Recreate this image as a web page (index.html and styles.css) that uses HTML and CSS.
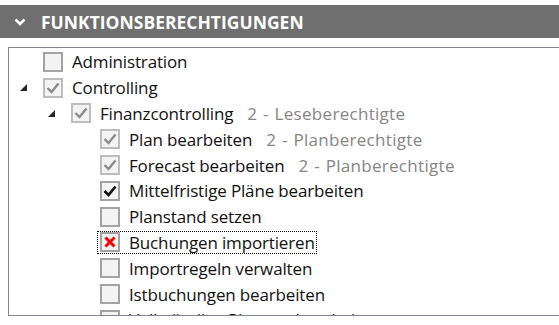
FILE: index.html
```html
<!DOCTYPE html>
<html lang="de">
<head>
  <meta charset="UTF-8">
  <title>Funktionsberechtigungen</title>
  <link rel="stylesheet" href="styles.css">
</head>
<body>
  <div class="section-header">
    <svg class="chevron" width="12" height="8" viewBox="0 0 12 8">
      <polyline points="1.5,1.5 6,6 10.5,1.5" fill="none" stroke="#fff" stroke-width="2.6"/>
    </svg>
    <span class="section-title">FUNKTIONSBERECHTIGUNGEN</span>
  </div>

  <div class="tree">
    <div class="row level-0">
      <span class="expander"></span>
      <span class="box"></span>
      <span class="label">Administration</span>
    </div>
    <div class="row level-0">
      <span class="expander open"><svg width="7" height="7" viewBox="0 0 7 7"><polygon points="7,0 7,7 0,7" fill="#262626"/></svg></span>
      <span class="box disabled"><svg width="14" height="12" viewBox="0 0 14 12"><polyline points="1.5,6 5.5,10 12.5,1.5" fill="none" stroke="#8a8a8a" stroke-width="2.4"/></svg></span>
      <span class="label">Controlling</span>
    </div>
    <div class="row level-1">
      <span class="expander open"><svg width="7" height="7" viewBox="0 0 7 7"><polygon points="7,0 7,7 0,7" fill="#262626"/></svg></span>
      <span class="box disabled"><svg width="14" height="12" viewBox="0 0 14 12"><polyline points="1.5,6 5.5,10 12.5,1.5" fill="none" stroke="#8a8a8a" stroke-width="2.4"/></svg></span>
      <span class="label">Finanzcontrolling</span>
      <span class="hint">2 - Leseberechtigte</span>
    </div>
    <div class="row level-2">
      <span class="expander"></span>
      <span class="box disabled"><svg width="14" height="12" viewBox="0 0 14 12"><polyline points="1.5,6 5.5,10 12.5,1.5" fill="none" stroke="#8a8a8a" stroke-width="2.4"/></svg></span>
      <span class="label">Plan bearbeiten</span>
      <span class="hint">2 - Planberechtigte</span>
    </div>
    <div class="row level-2">
      <span class="expander"></span>
      <span class="box disabled"><svg width="14" height="12" viewBox="0 0 14 12"><polyline points="1.5,6 5.5,10 12.5,1.5" fill="none" stroke="#8a8a8a" stroke-width="2.4"/></svg></span>
      <span class="label">Forecast bearbeiten</span>
      <span class="hint">2 - Planberechtigte</span>
    </div>
    <div class="row level-2">
      <span class="expander"></span>
      <span class="box"><svg width="14" height="12" viewBox="0 0 14 12"><polyline points="1.5,6 5.5,10 12.5,1.5" fill="none" stroke="#111" stroke-width="2.7"/></svg></span>
      <span class="label">Mittelfristige Pläne bearbeiten</span>
    </div>
    <div class="row level-2">
      <span class="expander"></span>
      <span class="box"></span>
      <span class="label">Planstand setzen</span>
    </div>
    <div class="row level-2">
      <span class="expander"></span>
      <span class="focus">
        <span class="box"><svg width="12" height="12" viewBox="0 0 12 12"><path d="M1.5,1.5 L10.5,10.5 M10.5,1.5 L1.5,10.5" fill="none" stroke="#f00" stroke-width="3"/></svg></span>
        <span class="label">Buchungen importieren</span>
      </span>
    </div>
    <div class="row level-2">
      <span class="expander"></span>
      <span class="box"></span>
      <span class="label">Importregeln verwalten</span>
    </div>
    <div class="row level-2">
      <span class="expander"></span>
      <span class="box"></span>
      <span class="label">Istbuchungen bearbeiten</span>
    </div>
    <div class="row level-2">
      <span class="expander"></span>
      <span class="box"></span>
      <span class="label">Vollständige Planung bearbeiten</span>
    </div>
  </div>
</body>
</html>
```

FILE: styles.css
```css
body {
  margin: 0;
  background-color: #fff;
  font-family: 'Open Sans', 'Noto Sans', sans-serif;
  overflow: hidden;
}

.section-header {
  margin-top: 5px;
  height: 33px;
  background-color: #6f6f6f;
  display: flex;
  align-items: center;
}

.chevron {
  margin-left: 14px;
  margin-right: 15px;
}

.section-title {
  color: #fff;
  font-weight: bold;
  font-size: 17.5px;
  letter-spacing: 0;
}

.tree {
  margin-top: 9px;
  margin-left: 8px;
  height: 266px;
  border: 1px solid #828790;
  border-right: none;
  padding-top: 1px;
  overflow: hidden;
}

.row {
  height: 25.8px;
  display: flex;
  align-items: center;
  font-size: 17px;
  letter-spacing: -0.15px;
  color: #111;
  white-space: nowrap;
}

.level-1 {
  padding-left: 28px;
}

.level-2 {
  padding-left: 57px;
}

.expander {
  width: 7px;
  height: 7px;
  margin-left: 11px;
  margin-right: 16px;
  display: flex;
}

.box {
  box-sizing: border-box;
  width: 20px;
  height: 20px;
  border: 2px solid #a3a3a3;
  background-color: #f3f3f3;
  display: flex;
  align-items: center;
  justify-content: center;
  margin-right: 9px;
}

.box.disabled {
  border-color: #bdbdbd;
}

.hint {
  color: #858585;
  margin-left: 14px;
  letter-spacing: 0.3px;
  word-spacing: 1px;
}

.focus {
  display: flex;
  align-items: center;
  outline: 1px dotted #000;
  outline-offset: 0;
  height: 21px;
  margin-left: -2px;
  padding-left: 2px;
  padding-right: 1px;
}
```
